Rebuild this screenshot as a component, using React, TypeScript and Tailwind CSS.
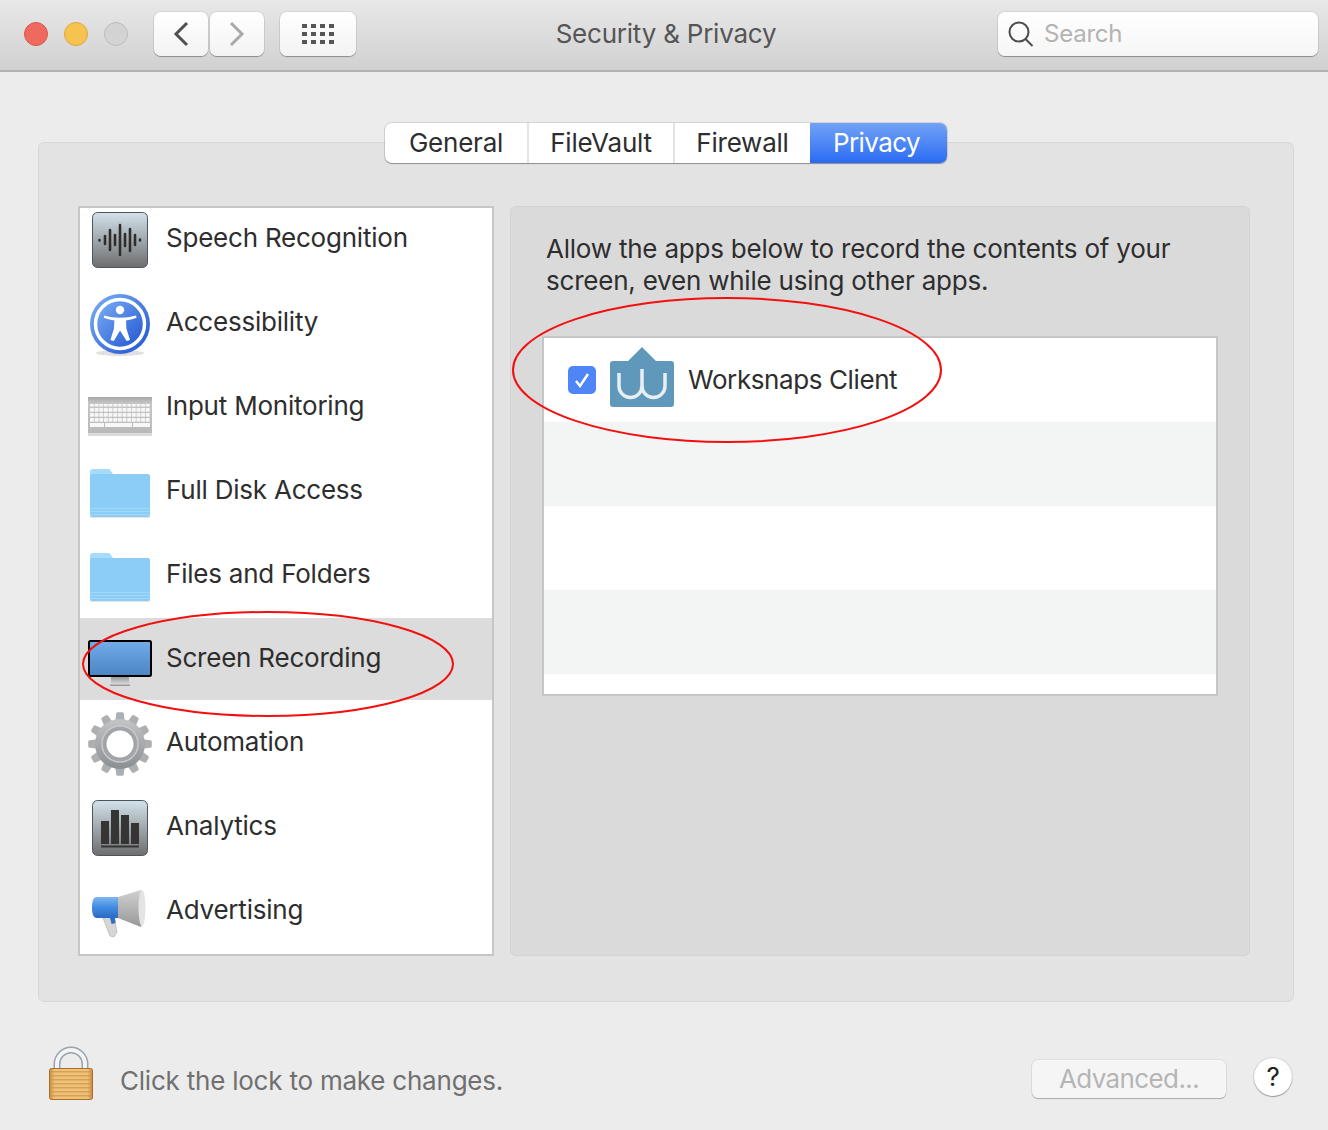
import type { ReactNode } from "react";

const font = "font-['Inter','Liberation_Sans',sans-serif]";

const SpeechIcon = () => (
  <svg width="64" height="64" viewBox="0 0 64 64">
    <defs>
      <linearGradient id="tile1" x1="0" y1="0" x2="0" y2="1">
        <stop offset="0" stopColor="#d3e2ea" />
        <stop offset="1" stopColor="#6d6d6d" />
      </linearGradient>
    </defs>
    <rect x="4.5" y="4.5" width="55" height="55" rx="5" fill="url(#tile1)" stroke="#4d5660" />
    <g stroke="#2e2e2e" strokeWidth="2.6" strokeLinecap="round">
      <path d="M11.500 32v.5M17 28v8M22 22v20M27 27v10M32 17v30M37 26v12M42 21v22M47 27v10M52 31.500v1" />
    </g>
  </svg>
);

const AccessibilityIcon = () => (
  <svg width="64" height="64" viewBox="0 0 64 64">
    <defs>
      <linearGradient id="acc" x1="0" y1="0" x2="1" y2="1">
        <stop offset="0" stopColor="#7db1f5" />
        <stop offset="1" stopColor="#1f52cf" />
      </linearGradient>
    </defs>
    <ellipse cx="32" cy="61" rx="24" ry="3" fill="#000" opacity="0.12" />
    <circle cx="32" cy="32" r="30" fill="url(#acc)" />
    <circle cx="32" cy="32" r="24.5" fill="url(#acc)" stroke="#fff" strokeWidth="3.500" />
    <g transform="translate(0 1)">
      <circle cx="32" cy="17" r="4.200" fill="#fff" />
      <path d="M16 22.500c6 1.800 10 2.200 16 2.200s10-.4 16-2.200l.6 2.200c-4 1.600-7.500 2.300-10.600 2.700l.4 8 3.600 11.600-3.400 1L32 37.500 25.800 48l-3.400-1 3.600-11.600.4-8c-3.100-.4-6.600-1.100-10.600-2.700z" fill="#fff" />
    </g>
  </svg>
);

const KeyboardIcon = () => (
  <svg width="64" height="64" viewBox="0 0 64 64">
    <defs>
      <linearGradient id="kb" x1="0" y1="0" x2="0" y2="1">
        <stop offset="0" stopColor="#a9a9a9" />
        <stop offset="0.18" stopColor="#c6c6c6" />
        <stop offset="1" stopColor="#b9b9b9" />
      </linearGradient>
    </defs>
    <rect x="0" y="57" width="64" height="3" fill="#000" opacity="0.14" />
    <rect x="0" y="21" width="64" height="36" fill="url(#kb)" />
    {[28, 32, 37, 42].map((y, row) =>
      Array.from({ length: 13 }).map((_, i) => (
        <rect key={`${row}-${i}`} x={2 + i * 4.65} y={y} width="3.900" height={row === 0 ? 2.600 : 3.800} rx="0.400" fill="#f7f7f7" />
      )),
    )}
    <rect x="2" y="47" width="14" height="4" fill="#f7f7f7" />
    <rect x="17" y="47" width="27" height="4" fill="#f7f7f7" />
    <rect x="45" y="47" width="17" height="4" fill="#f7f7f7" />
  </svg>
);

const FolderIcon = () => (
  <svg width="64" height="64" viewBox="0 0 64 64">
    <path d="M2 12a3 3 0 0 1 3-3h15c1.500 0 2 .5 3 2l2 3h34a3 3 0 0 1 3 3v8H2z" fill="#a6dcfb" />
    <rect x="2" y="56" width="60" height="2" rx="1" fill="#000" opacity="0.1" />
    <rect x="2" y="14" width="60" height="43" rx="2.500" fill="#8bcdf7" />
    <rect x="2" y="48" width="60" height="1" fill="#a2d8f9" />
    <rect x="2" y="51" width="60" height="1" fill="#a2d8f9" />
    <rect x="2" y="54" width="60" height="1" fill="#a2d8f9" />
  </svg>
);

const MonitorIcon = () => (
  <svg width="64" height="64" viewBox="0 0 64 64">
    <defs>
      <linearGradient id="screen" x1="0" y1="0" x2="0" y2="1">
        <stop offset="0" stopColor="#72ace9" />
        <stop offset="1" stopColor="#4c84c4" />
      </linearGradient>
      <linearGradient id="stand" x1="0" y1="0" x2="0" y2="1">
        <stop offset="0" stopColor="#8d8d8d" />
        <stop offset="1" stopColor="#d8d8d8" />
      </linearGradient>
    </defs>
    <rect x="23" y="48" width="18" height="8" fill="url(#stand)" />
    <rect x="22" y="56.500" width="20" height="1.500" fill="#9a9a9a" />
    <rect x="1" y="13" width="62" height="35" rx="1.500" fill="url(#screen)" stroke="#000" strokeWidth="2" />
  </svg>
);

const teeth = Array.from({ length: 12 }, (_, i) => i * 30);

const GearIcon = () => (
  <svg width="64" height="64" viewBox="0 0 64 64">
    <defs>
      <linearGradient id="gear" x1="0" y1="0" x2="0" y2="1">
        <stop offset="0" stopColor="#c2c4c6" />
        <stop offset="1" stopColor="#8c8f92" />
      </linearGradient>
    </defs>
    {teeth.map((deg) => (
      <path key={deg} d="M27 12l1.200-10.500a1.500 1.500 0 0 1 1.500-1.300h4.600a1.500 1.500 0 0 1 1.500 1.300L37 12z" fill="#adb0b2" transform={`rotate(${deg} 32 32)`} />
    ))}
    <circle cx="32" cy="32" r="25" fill="url(#gear)" />
    <circle cx="32" cy="32" r="18" fill="#a2a5a7" stroke="#c7c9ca" strokeWidth="1.500" />
    <circle cx="32" cy="32" r="13.500" fill="#fff" />
  </svg>
);

const AnalyticsIcon = () => (
  <svg width="64" height="64" viewBox="0 0 64 64">
    <defs>
      <linearGradient id="tile2" x1="0" y1="0" x2="0" y2="1">
        <stop offset="0" stopColor="#d3e2ea" />
        <stop offset="1" stopColor="#6d6d6d" />
      </linearGradient>
    </defs>
    <rect x="4.500" y="4.500" width="55" height="55" rx="5" fill="url(#tile2)" stroke="#4d5660" />
    <g fill="#353535">
      <rect x="13" y="25" width="8" height="23" />
      <rect x="23" y="14" width="8" height="34" />
      <rect x="33" y="19" width="8" height="29" />
      <rect x="43" y="27" width="8" height="21" />
      <rect x="13" y="49.500" width="38" height="2" />
    </g>
  </svg>
);

const MegaphoneIcon = () => (
  <svg width="64" height="64" viewBox="0 0 64 64">
    <defs>
      <linearGradient id="blueHorn" x1="0" y1="0" x2="0" y2="1">
        <stop offset="0" stopColor="#7fb6ee" />
        <stop offset="0.5" stopColor="#3f8be2" />
        <stop offset="1" stopColor="#2c69c3" />
      </linearGradient>
      <linearGradient id="grayHorn" x1="0" y1="0" x2="0" y2="1">
        <stop offset="0" stopColor="#d0d0d0" />
        <stop offset="1" stopColor="#989898" />
      </linearGradient>
    </defs>
    <path d="M15 38l11-1 3 15-3 5-4-1z" fill="#d6d6d6" stroke="#ababab" strokeWidth="0.600" />
    <path d="M22 38h5l.6 5-4 1z" fill="#2d6fc8" />
    <path d="M30 17L53 10c3 6 3 31 0 37L30 38z" fill="url(#grayHorn)" />
    <ellipse cx="54" cy="28" rx="3.500" ry="18" fill="#e4e4e4" />
    <path d="M9 17h21v21H9c-4 0-5-5-5-10.500S5 17 9 17z" fill="url(#blueHorn)" />
  </svg>
);

const WorksnapsLogo = () => (
  <svg width="64" height="60" viewBox="0 0 64 60" className="shrink-0">
    <path d="M3 14h15L32 0l14 14h15a3 3 0 0 1 3 3v40a3 3 0 0 1-3 3H3a3 3 0 0 1-3-3V17a3 3 0 0 1 3-3z" fill="#5f98ba" />
    <path d="M9 26v13a11.500 11.500 0 0 0 23 0V22M32 39a11.500 11.500 0 0 0 23 0V26" fill="none" stroke="#e8eff3" strokeWidth="3.500" />
  </svg>
);

const LockIcon = () => (
  <svg width="44" height="54" viewBox="0 0 44 54" className="shrink-0">
    <defs>
      <linearGradient id="brass" x1="0" y1="0" x2="1" y2="0">
        <stop offset="0" stopColor="#c98a3e" />
        <stop offset="0.12" stopColor="#efc27a" />
        <stop offset="0.88" stopColor="#efc27a" />
        <stop offset="1" stopColor="#c98a3e" />
      </linearGradient>
    </defs>
    <path d="M8 24V18a14 14 0 0 1 28 0v6" fill="none" stroke="#98a3ad" strokeWidth="7" />
    <path d="M8 24V18a14 14 0 0 1 28 0v6" fill="none" stroke="#f2f4f6" strokeWidth="4" />
    <rect x="0.500" y="22.500" width="43" height="31" rx="2" fill="url(#brass)" stroke="#a96d2c" />
    {[25, 29, 33, 37, 41, 45, 49].map((y) => (
      <rect key={y} x="2" y={y} width="40" height="1.500" fill="#cf9548" opacity="0.75" />
    ))}
  </svg>
);

const rows: { label: string; icon: ReactNode; selected?: boolean }[] = [
  { label: "Speech Recognition", icon: <SpeechIcon /> },
  { label: "Accessibility", icon: <AccessibilityIcon /> },
  { label: "Input Monitoring", icon: <KeyboardIcon /> },
  { label: "Full Disk Access", icon: <FolderIcon /> },
  { label: "Files and Folders", icon: <FolderIcon /> },
  { label: "Screen Recording", icon: <MonitorIcon />, selected: true },
  { label: "Automation", icon: <GearIcon /> },
  { label: "Analytics", icon: <AnalyticsIcon /> },
  { label: "Advertising", icon: <MegaphoneIcon /> },
];

const ToolbarButton = ({ className, children }: { className: string; children: ReactNode }) => (
  <div className={`h-[44px] flex items-center justify-center rounded-[7px] bg-gradient-to-b from-white to-[#f3f3f3] shadow-[0_1px_1px_rgba(0,0,0,0.3),0_0_0_1px_rgba(0,0,0,0.06)] ${className}`}>
    {children}
  </div>
);

export default function App() {
  return (
    <div className={`${font} relative w-[1328px] h-[1130px] overflow-hidden bg-[#ececec] text-[26px] leading-[32px] tracking-[-0.22px] text-[#2e2e2e] flex flex-col`}>
      {/* Title bar */}
      <header className="h-[72px] shrink-0 flex items-center pb-[2px] pl-[24px] pr-[10px] bg-gradient-to-b from-[#e8e8e8] to-[#d1d1d1] border-b-2 border-[#b2b2b2]">
        <div className="flex gap-[16px] w-[130px]">
          <span className="w-[24px] h-[24px] rounded-full bg-[#ee6a5e] border border-[#d9574c]" />
          <span className="w-[24px] h-[24px] rounded-full bg-[#f6c250] border border-[#dfa83b]" />
          <span className="w-[24px] h-[24px] rounded-full bg-[#d3d3d3] border border-[#bcbcbc]" />
        </div>
        <ToolbarButton className="w-[54px]">
          <svg width="18" height="26" viewBox="0 0 18 26" fill="none" stroke="#505050" strokeWidth="3"><path d="M15 2L4 13l11 11" /></svg>
        </ToolbarButton>
        <ToolbarButton className="w-[54px] ml-[2px]">
          <svg width="18" height="26" viewBox="0 0 18 26" fill="none" stroke="#aaaaaa" strokeWidth="3"><path d="M3 2l11 11L3 24" /></svg>
        </ToolbarButton>
        <ToolbarButton className="w-[76px] ml-[16px]">
          <div className="grid grid-cols-4 gap-x-[4px] gap-y-[4px]">
            {Array.from({ length: 12 }).map((_, i) => (
              <span key={i} className="w-[5px] h-[4px] bg-[#565656]" />
            ))}
          </div>
        </ToolbarButton>
        <div className="w-[642px] pr-[22px] text-center text-[#555555]">Security &amp; Privacy</div>
        <div className="w-[320px] h-[44px] flex items-center pl-[10px] rounded-[7px] bg-gradient-to-b from-white to-[#f6f6f6] shadow-[0_1px_1px_rgba(0,0,0,0.3),0_0_0_1px_rgba(0,0,0,0.06)]">
          <svg width="26" height="26" viewBox="0 0 26 26" fill="none" stroke="#4c4c4c" strokeWidth="2"><circle cx="11" cy="11" r="9.500" /><path d="M17.500 18l7 7" /></svg>
          <span className="ml-[10px] text-[24px] text-[#b3b3b3]">Search</span>
        </div>
      </header>

      {/* Tabs and panel */}
      <main className="pl-[38px] pr-[34px] pt-[51px] flex flex-col">
        <div className="self-center z-10 -mb-[21px] h-[40px] flex rounded-[7px] bg-white shadow-[0_1px_1px_rgba(0,0,0,0.3),0_0_0_1px_rgba(0,0,0,0.1)] overflow-hidden">
          <div className="w-[144px] flex items-center justify-center border-r-2 border-[#e3e3e3]">General</div>
          <div className="w-[146px] flex items-center justify-center border-r-2 border-[#e3e3e3]">FileVault</div>
          <div className="w-[135px] flex items-center justify-center">Firewall</div>
          <div className="w-[137px] flex items-center justify-center pr-[4px] tracking-[-0.6px] bg-gradient-to-b from-[#72a2f6] to-[#2a6af3] text-white">Privacy</div>
        </div>
        <section className="h-[860px] rounded-[6px] bg-[#e3e3e3] border border-[#d8d8d8] pt-[63px] px-[39px] flex gap-[16px]">
          {/* Category list */}
          <div className="w-[416px] h-[750px] bg-white border-2 border-[#c6c6c6] overflow-hidden">
            <div className="-mt-[10px]">
              {rows.map((row) => (
                <div key={row.label} className={row.selected ? "h-[82px] mb-[2px] pt-[2px] flex items-center pl-[8px] bg-[#dcdcdc]" : "h-[84px] flex items-center pl-[8px]"}>
                  <span className="w-[64px] h-[64px] shrink-0">{row.icon}</span>
                  <span className="ml-[14px] pb-[4px]">{row.label}</span>
                </div>
              ))}
            </div>
          </div>

          {/* Detail pane */}
          <div className="w-[740px] h-[750px] rounded-[6px] bg-[#dadada] border border-[#d2d2d2] pt-[26px] px-[32px]">
            <p className="pl-[3px]">
              Allow the apps below to record the contents of your<br />
              screen, even while using other apps.
            </p>
            <div className="mt-[39px] -ml-[1px] w-[676px] h-[360px] bg-white border-2 border-[#c6c6c6]">
              <div className="h-[84px] flex items-center pl-[24px]">
                <span className="w-[28px] h-[28px] rounded-[5px] bg-[#4f86f7] flex items-center justify-center">
                  <svg width="18" height="18" viewBox="0 0 18 18" fill="none" stroke="#fff" strokeWidth="2.500"><path d="M3 10l4 5 8-12" /></svg>
                </span>
                <span className="ml-[14px] -mt-[6px]"><WorksnapsLogo /></span>
                <span className="ml-[14px] tracking-[-0.4px]">Worksnaps Client</span>
              </div>
              <div className="h-[84px] bg-[#f3f4f4]" />
              <div className="h-[84px]" />
              <div className="h-[84px] bg-[#f3f4f4]" />
            </div>
          </div>
        </section>

        {/* Footer */}
        <footer className="mt-[44px] h-[54px] pl-[11px] flex items-center">
          <LockIcon />
          <span className="ml-[27px] mt-[16px] text-[#707070]">Click the lock to make changes.</span>
          <div className="ml-auto mt-[12px] w-[194px] h-[38px] flex items-center justify-center rounded-[6px] bg-[#f5f5f5] text-[#b5b5b5] tracking-[-0.6px] shadow-[0_1px_1px_rgba(0,0,0,0.25),0_0_0_1px_rgba(0,0,0,0.05)]">Advanced...</div>
          <div className="ml-[28px] mr-[2px] mt-[8px] w-[38px] h-[38px] rounded-full bg-white flex items-center justify-center text-[#222222] shadow-[0_1px_1px_rgba(0,0,0,0.3),0_0_0_1px_rgba(0,0,0,0.08)]">?</div>
        </footer>
      </main>

      {/* Red annotation ellipses drawn over the window */}
      <svg className="absolute inset-0 pointer-events-none" width="1328" height="1130" fill="none" stroke="#f40f0f" strokeWidth="2">
        <ellipse cx="268" cy="664" rx="185" ry="52" />
        <ellipse cx="727" cy="370" rx="214" ry="72" />
      </svg>
    </div>
  );
}
